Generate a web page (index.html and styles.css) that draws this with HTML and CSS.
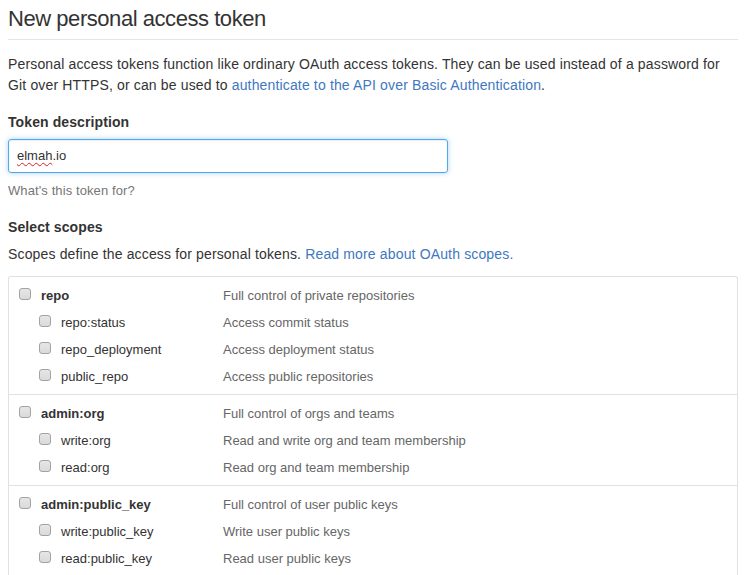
FILE: index.html
```html
<!DOCTYPE html>
<html>
<head>
<meta charset="utf-8">
<link rel="stylesheet" href="styles.css">
</head>
<body>
<div class="page">
  <h1 class="title">New personal access token</h1>
  <p class="intro">Personal access tokens function like ordinary OAuth access tokens. They can be used instead of a password for Git over HTTPS, or can be used to <a href="#" class="link">authenticate to the API over Basic Authentication</a>.</p>

  <div class="label">Token description</div>
  <div class="input"><span class="misspelt">elmah</span>.io</div>
  <div class="note">What's this token for?</div>

  <div class="label label-scopes">Select scopes</div>
  <p class="scopes-help">Scopes define the access for personal tokens. <a href="#" class="link">Read more about OAuth scopes.</a></p>

  <div class="scopes">
    <div class="group">
      <div class="row"><div class="left"><span class="cb"></span><span class="name main">repo</span></div><span class="desc">Full control of private repositories</span></div>
      <div class="row sub"><div class="left"><span class="cb"></span><span class="name">repo:status</span></div><span class="desc">Access commit status</span></div>
      <div class="row sub"><div class="left"><span class="cb"></span><span class="name">repo_deployment</span></div><span class="desc">Access deployment status</span></div>
      <div class="row sub"><div class="left"><span class="cb"></span><span class="name">public_repo</span></div><span class="desc">Access public repositories</span></div>
    </div>
    <div class="group">
      <div class="row"><div class="left"><span class="cb"></span><span class="name main">admin:org</span></div><span class="desc">Full control of orgs and teams</span></div>
      <div class="row sub"><div class="left"><span class="cb"></span><span class="name">write:org</span></div><span class="desc">Read and write org and team membership</span></div>
      <div class="row sub"><div class="left"><span class="cb"></span><span class="name">read:org</span></div><span class="desc">Read org and team membership</span></div>
    </div>
    <div class="group">
      <div class="row"><div class="left"><span class="cb"></span><span class="name main">admin:public_key</span></div><span class="desc">Full control of user public keys</span></div>
      <div class="row sub"><div class="left"><span class="cb"></span><span class="name">write:public_key</span></div><span class="desc">Write user public keys</span></div>
      <div class="row sub"><div class="left"><span class="cb"></span><span class="name">read:public_key</span></div><span class="desc">Read user public keys</span></div>
    </div>
  </div>
</div>
</body>
</html>
```

FILE: styles.css
```css
html, body {
  margin: 0;
  padding: 0;
  background: #fff;
}
body {
  font-family: "Liberation Sans", Arial, sans-serif;
  font-size: 14px;
  color: #333;
  overflow: hidden;
}
.page {
  width: 730px;
  margin: 0 8px;
}
.title {
  margin: 0;
  padding-top: 4px;
  font-size: 22px;
  font-weight: normal;
  letter-spacing: -0.45px;
  line-height: 30px;
  height: 35px;
  border-bottom: 1px solid #e5e5e5;
}
.intro {
  margin: 14px 0 0;
  line-height: 21px;
  letter-spacing: 0.15px;
}
.link {
  color: #4078c0;
  text-decoration: none;
}
.label {
  margin-top: 16px;
  font-weight: bold;
  line-height: 21px;
  letter-spacing: 0.1px;
}
.input {
  margin-top: 6px;
  box-sizing: border-box;
  width: 440px;
  height: 34px;
  padding: 0 8px;
  font-size: 13px;
  line-height: 32px;
  border: 1px solid #51a7e8;
  border-radius: 3px;
  box-shadow: inset 0 1px 2px rgba(0,0,0,0.075), 0 0 5px rgba(81,167,232,0.5);
}
.misspelt {
  text-decoration: underline wavy #e02020;
  text-decoration-thickness: 1px;
  text-underline-offset: 2px;
}
.note {
  margin-top: 8px;
  font-size: 13px;
  line-height: 20px;
  color: #767676;
  letter-spacing: 0.1px;
}
.label-scopes {
  margin-top: 16px;
}
.scopes-help {
  margin: 6px 0 0;
  line-height: 21px;
  letter-spacing: 0.15px;
}
.scopes {
  margin-top: 11px;
  border: 1px solid #e1e1e1;
  border-bottom: 0;
  border-radius: 3px 3px 0 0;
}
.group {
  padding: 5px 0 4px;
  border-bottom: 1px solid #e1e1e1;
}
.row {
  display: flex;
  height: 27px;
  line-height: 27px;
  font-size: 13px;
}
.left {
  display: flex;
  align-items: flex-start;
  box-sizing: border-box;
  width: 214px;
  padding-left: 10px;
}
.row.sub .left {
  padding-left: 30px;
}
.cb {
  flex: 0 0 auto;
  box-sizing: border-box;
  width: 12px;
  height: 12px;
  margin-top: 6px;
  margin-right: 10px;
  border: 1px solid #a3a3a3;
  border-radius: 3px;
  background: linear-gradient(#e6e6e6, #dadada);
}
.name {
  color: #333;
}
.name.main {
  font-weight: bold;
}
.desc {
  color: #666;
}
```
